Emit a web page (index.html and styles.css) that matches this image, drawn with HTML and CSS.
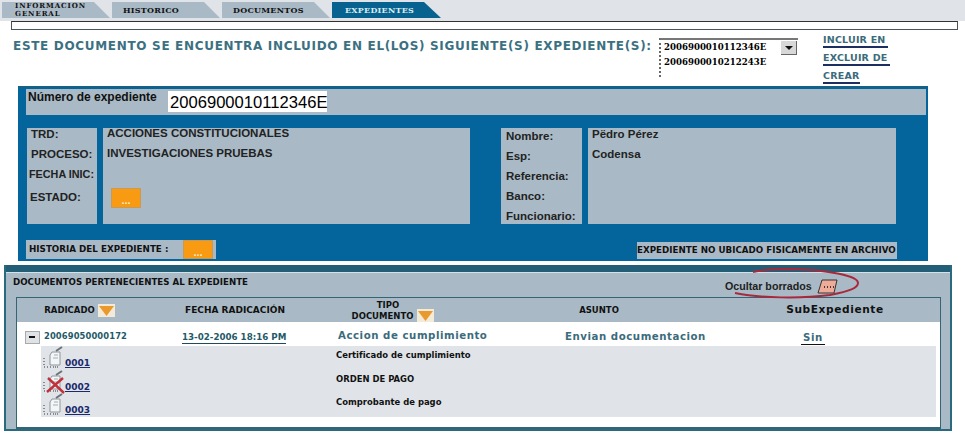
FILE: index.html
```html
<!DOCTYPE html>
<html lang="es">
<head>
    <meta charset="UTF-8">
    <title>Expedientes</title>
    <link rel="stylesheet" href="styles.css">
</head>
<body>
    <!-- pestañas -->
    <nav class="tabs">
        <a class="tab tab-two">INFORMACION<br>GENERAL</a>
        <a class="tab">HISTORICO</a>
        <a class="tab">DOCUMENTOS</a>
        <a class="tab active">EXPEDIENTES</a>
    </nav>
    <div class="empty-box"></div>

    <!-- cabecera -->
    <div class="head-row">
        <h1>ESTE DOCUMENTO SE ENCUENTRA INCLUIDO EN EL(LOS) SIGUIENTE(S) EXPEDIENTE(S):</h1>
        <div class="list-box">
            <div class="list-items">
                <div>2006900010112346E</div>
                <div>2006900010212243E</div>
            </div>
            <span class="list-arrow"></span>
        </div>
        <div class="head-links">
            <a>INCLUIR EN</a>
            <a>EXCLUIR DE</a>
            <a>CREAR</a>
        </div>
    </div>

    <!-- datos del expediente -->
    <section class="exp-panel">
        <div class="number-row">
            <span class="number-label">Número de expediente</span>
            <span class="number-value">2006900010112346E</span>
        </div>
        <div class="info-row">
            <div class="cell labels labels-left">
                <div class="l-trd">TRD:</div>
                <div class="l-proc">PROCESO:</div>
                <div class="l-fecha">FECHA INIC:</div>
                <div class="l-estado">ESTADO:</div>
            </div>
            <div class="cell values values-left">
                <div>ACCIONES CONSTITUCIONALES</div>
                <div>INVESTIGACIONES PRUEBAS</div>
                <button class="orange-btn estado-btn">...</button>
            </div>
            <div class="cell labels labels-right">
                <div>Nombre:</div>
                <div>Esp:</div>
                <div>Referencia:</div>
                <div>Banco:</div>
                <div>Funcionario:</div>
            </div>
            <div class="cell values values-right">
                <div>Pëdro Pérez</div>
                <div>Codensa</div>
            </div>
        </div>
        <div class="history-row">
            <div class="history">
                <span>HISTORIA DEL EXPEDIENTE :</span>
                <button class="orange-btn">...</button>
            </div>
            <div class="no-archive">EXPEDIENTE NO UBICADO FISICAMENTE EN ARCHIVO</div>
        </div>
    </section>

    <!-- documentos -->
    <section class="docs-panel">
        <div class="docs-top">
            <span class="docs-title">DOCUMENTOS PERTENECIENTES AL EXPEDIENTE</span>
            <div class="hide-deleted">
                <span class="hide-text">Ocultar borrados</span>
                <svg class="hide-btn" width="21" height="16" viewBox="0 0 21 16">
                    <path d="M5 1H20L17 14H1Z" fill="#eeab98" stroke="#333" stroke-width="1"/>
                    <path d="M7 8h1M10 8h1M13 8h1M16 8h1" stroke="#111" stroke-width="1.4"/>
                </svg>
                <svg class="hide-ring" width="128" height="32" viewBox="0 0 128 32">
                    <path d="M2 25C27 30 67 31 97 27C117 23 125 20 125 15C125 8 97 2 57 1C42 1 29 2 20 4" fill="none" stroke="#a8283c" stroke-width="2"/>
                </svg>
            </div>
        </div>
        <div class="docs-table">
            <div class="t-head">
                <div class="th th-rad">RADICADO <svg class="sort" width="17" height="13" viewBox="0 0 17 13"><rect width="17" height="13" fill="#f3ead8"/><path d="M1 2H16L8.5 12Z" fill="#ea9a2c"/></svg></div>
                <div class="th th-fecha">FECHA RADICACIÓN</div>
                <div class="th th-tipo"><span class="tipo-top">TIPO</span><br>DOCUMENTO <svg class="sort" width="17" height="13" viewBox="0 0 17 13"><rect width="17" height="13" fill="#f3ead8"/><path d="M1 2H16L8.5 12Z" fill="#ea9a2c"/></svg></div>
                <div class="th th-asunto">ASUNTO</div>
                <div class="th th-sub">SubExpediente</div>
            </div>
            <div class="t-row">
                <div class="td-rad"><span class="minus"></span><span class="rad-num">20069050000172</span></div>
                <a class="td-fecha">13-02-2006 18:16 PM</a>
                <div class="td-text td-tipo">Accion de cumplimiento</div>
                <div class="td-text td-asunto">Envian documentacion</div>
                <a class="td-text td-sin">Sin</a>
            </div>
            <div class="sub-rows">
                <div class="sub-row">
                    <svg class="doc-icon" width="22" height="24" viewBox="0 0 22 24"><use href="#doc"/></svg>
                    <a class="annex">0001</a>
                    <span class="annex-name">Certificado de cumplimiento</span>
                </div>
                <div class="sub-row">
                    <svg class="doc-icon" width="22" height="24" viewBox="0 0 22 24"><use href="#doc"/><path d="M5 8L21 23M20 8L4 22" stroke="#c2303a" stroke-width="2.4"/></svg>
                    <a class="annex">0002</a>
                    <span class="annex-name">ORDEN DE PAGO</span>
                </div>
                <div class="sub-row">
                    <svg class="doc-icon" width="22" height="24" viewBox="0 0 22 24"><use href="#doc"/></svg>
                    <a class="annex">0003</a>
                    <span class="annex-name">Comprobante de pago</span>
                </div>
            </div>
        </div>
    </section>

    <!-- icono de anexo -->
    <svg width="0" height="0" class="defs">
        <defs>
            <g id="doc">
                <path d="M9 6H17V19H7V9Z" fill="#f4f5f6" stroke="#8d959c" stroke-width="1"/>
                <path d="M11 9h4M10 12h5" stroke="#a5acb2"/>
                <path d="M13 5L19 1" stroke="#6a7278" stroke-width="2"/>
                <path d="M1 12v1M1 15v1M1 18v1M1 21h1M4 21h1M7 21h1M10 21h5" stroke="#333" stroke-dasharray="1 1"/>
            </g>
        </defs>
    </svg>
</body>
</html>
```

FILE: styles.css
```css
* {
    box-sizing: border-box;
}

body {
    margin: 0;
    background: #fff;
    color: #000;
    font-family: "DejaVu Sans", sans-serif;
    font-size: 10px;
}

/* pestañas */
.tabs {
    display: flex;
    gap: 2px;
    height: 21px;
    padding: 2px 0 0 2px;
    background: #e0e4e8;
}

.tab {
    width: 108px;
    height: 16px;
    padding: 1px 0 0 11px;
    background: #a9bac6;
    clip-path: polygon(0 0, 92px 0, 100% 100%, 0 100%);
    font-family: "DejaVu Serif", serif;
    font-size: 8px;
    font-weight: bold;
    line-height: 14px;
    letter-spacing: 0.25px;
    color: #111;
}

.tab.active {
    width: 109px;
    padding-left: 13px;
}

.tab-two {
    padding: 0 0 0 13px;
    font-size: 7px;
    line-height: 7.5px;
    letter-spacing: 0.9px;
}

.tab.active {
    background: #07628f;
    color: #d9ecf2;
}

.empty-box {
    height: 9px;
    margin: 0 7px 0 11px;
    border: 1px solid #4a5358;
    border-top-color: #333;
}

/* cabecera */
.head-row {
    display: flex;
    height: 56px;
    padding: 2px 0 0 13px;
}

h1 {
    width: 646px;
    margin: 7px 0 0;
    font-size: 12px;
    font-weight: bold;
    white-space: nowrap;
    letter-spacing: 0.68px;
    color: #3b7082;
}

.list-box {
    position: relative;
    width: 139px;
    height: 39px;
    margin-top: 6px;
    padding: 0 0 0 3px;
    border-top: 2px solid #777;
    border-left: 2px dotted #666;
}

.list-items div {
    height: 15px;
    font-family: "DejaVu Serif", serif;
    font-size: 8.6px;
    font-weight: bold;
    line-height: 15px;
}

.list-arrow {
    position: absolute;
    top: 1px;
    right: 1px;
    width: 16px;
    height: 14px;
    background: #d8d8d8;
    border-right: 1px solid #666;
    border-bottom: 1px solid #666;
}

.list-arrow::after {
    content: "";
    position: absolute;
    top: 5px;
    left: 4px;
    border: 4px solid transparent;
    border-top: 4px solid #111;
}

.head-links {
    display: flex;
    flex-direction: column;
    gap: 4px;
    margin: 2px 0 0 25px;
}

.head-links a {
    height: 14px;
    font-size: 9.5px;
    font-weight: bold;
    line-height: 12px;
    white-space: nowrap;
    letter-spacing: 0.2px;
    color: #3b6b7c;
    border-bottom: 2px solid #1c2f60;
}

.head-links a:nth-child(1) { width: 65px; }
.head-links a:nth-child(2) { width: 67px; }
.head-links a:nth-child(3) { width: 37px; }

/* datos del expediente */
.exp-panel {
    width: 910px;
    height: 175px;
    margin-left: 18px;
    padding: 2px 2px 0 8px;
    background: #03659c;
    border-top: 1px solid #225f77;
}

.number-row {
    display: flex;
    height: 26px;
    background: #a9bac6;
}

.number-label {
    width: 142px;
    padding: 1px 0 0 2px;
    font-family: "Liberation Sans", sans-serif;
    font-size: 12px;
    font-weight: bold;
    color: #111;
}

.number-value {
    width: 159px;
    height: 21px;
    margin-top: 2px;
    padding-left: 2px;
    background: #fff;
    font-family: "Liberation Sans", sans-serif;
    font-size: 16.6px;
    line-height: 23px;
    color: #000;
}

.info-row {
    display: flex;
    height: 96px;
    margin-top: 13px;
    padding-left: 1px;
}

.cell {
    height: 96px;
    background: #a9bac6;
    font-family: "Liberation Sans", sans-serif;
    font-size: 11.5px;
    font-weight: bold;
    color: #222;
}

.labels-left {
    width: 70px;
    padding-left: 3px;
}

.labels-left div {
    height: 20px;
    white-space: nowrap;
}

.l-trd { padding-left: 1px; }
.l-proc { padding-left: 1px; }
.l-fecha { margin-left: -1px; font-size: 10.8px; }
.l-estado { padding-top: 3px; }

.values-left {
    width: 367px;
    margin-left: 6px;
    padding-left: 4px;
}

.values div {
    height: 20px;
}

.values-left div:first-child {
    margin-top: -1px;
}

.estado-btn {
    display: block;
    margin: 21px 0 0 4px;
}

.labels-right {
    width: 81px;
    margin-left: 31px;
    padding: 1px 0 0 5px;
}

.labels-right div {
    height: 20px;
    padding-top: 1px;
    white-space: nowrap;
}

.values-right {
    width: 308px;
    margin-left: 6px;
    padding-left: 4px;
}

.orange-btn {
    width: 30px;
    height: 20px;
    padding: 4px 0 0;
    background: #f99b12;
    border: 1px solid #c99a55;
    font-family: "Liberation Sans", sans-serif;
    font-size: 11px;
    font-weight: bold;
    line-height: 12px;
    color: #f5ead0;
}

.history-row {
    display: flex;
    justify-content: space-between;
    align-items: flex-end;
    height: 19px;
    margin-top: 16px;
    padding-right: 29px;
}

.history {
    display: flex;
    justify-content: space-between;
    width: 190px;
    height: 19px;
    padding: 0 3px;
    background: #a9bac6;
    font-size: 8.75px;
    font-weight: bold;
    line-height: 19px;
    color: #111;
}

.history .orange-btn {
    height: 19px;
}

.no-archive {
    width: 260px;
    height: 17px;
    background: #a9bac6;
    font-size: 8.72px;
    font-weight: bold;
    line-height: 16px;
    white-space: nowrap;
    color: #111;
}

/* documentos */
.docs-panel {
    width: 948px;
    height: 166px;
    margin: 4px 0 0 4px;
    padding: 8px 0 0;
    background: linear-gradient(#225f77 7px, #cfe3e8 7px, #cfe3e8 8px, #a9bac6 8px);
    border: 2px solid #2a6a7e;
    border-top: 0;
}

.docs-top {
    display: flex;
    height: 24px;
    padding-left: 7px;
}

.docs-title {
    margin-top: 4px;
    font-size: 8.67px;
    font-weight: bold;
    white-space: nowrap;
    color: #111;
}

.hide-deleted {
    position: relative;
    display: flex;
    gap: 5px;
    height: 18px;
    margin: 6px 0 0 477px;
    font-family: "Liberation Sans", sans-serif;
    font-size: 10.7px;
    font-weight: bold;
    line-height: 15px;
    white-space: nowrap;
    color: #222;
}

.hide-ring {
    position: absolute;
    top: -11px;
    left: 8px;
}

.docs-table {
    width: 925px;
    height: 132px;
    margin-left: 10px;
    background: #fff;
    border: 1px solid #356475;
    border-bottom-width: 2px;
}

.t-head {
    display: grid;
    grid-template-columns: 143px 150px 176px 226px 1fr;
    height: 24px;
    background: #a9bac6;
    font-weight: bold;
    color: #111;
}

.th {
    display: flex;
    align-items: center;
    justify-content: center;
    font-size: 8.5px;
    white-space: nowrap;
}

.th-rad { padding-right: 18px; gap: 3px; }
.th-fecha { font-size: 9px; }

.th-tipo {
    display: block;
    padding: 2px 10px 0 0;
    text-align: center;
    line-height: 11px;
}

.tipo-top {
    margin-right: 10px;
}

.th-tipo .sort {
    position: relative;
    top: -1px;
    margin: -4px 0 -4px 1px;
    vertical-align: middle;
}

.sort {
    flex: none;
}

.th-sub {
    padding: 0 0 3px 18px;
    font-size: 10.6px;
    letter-spacing: 0.6px;
}

.t-row {
    display: grid;
    grid-template-columns: 165px 156px 227px 236px 1fr;
    height: 24px;
}

.td-rad {
    display: flex;
    align-items: center;
    padding: 1px 0 0 8px;
}

.minus {
    position: relative;
    width: 15px;
    height: 13px;
    margin: 3px 4px 0 0;
    background: #dfe3e6;
    border: 1px solid #aaa;
}

.minus::after {
    content: "";
    position: absolute;
    top: 4px;
    left: 3px;
    width: 6px;
    height: 2px;
    background: #111;
}

.rad-num {
    font-size: 8.4px;
    font-weight: bold;
    letter-spacing: 0.1px;
    color: #1f5a68;
}

.td-fecha {
    align-self: start;
    justify-self: start;
    margin-top: 10px;
    font-size: 8.7px;
    font-weight: bold;
    line-height: 11px;
    white-space: nowrap;
    color: #1f5a68;
    border-bottom: 1px solid #1f4a60;
}

.td-text {
    font-size: 10.2px;
    font-weight: bold;
    letter-spacing: 0.55px;
    line-height: 24px;
    white-space: nowrap;
    color: #3b6b7c;
}

.td-sin {
    justify-self: start;
    height: 17px;
    margin: 6px 0 0;
    padding: 0 2px;
    line-height: 20px;
    border-bottom: 1px solid #111;
}

.td-tipo { padding-top: 2px; }
.td-asunto { padding-top: 3px; }

.sub-rows {
    width: 895px;
    height: 71px;
    margin-left: 24px;
    background: #e0e4e8;
}

.sub-row {
    display: flex;
    height: 24px;
    padding-left: 2px;
    margin-bottom: -0.5px;
}

.doc-icon {
    flex: none;
}

.annex {
    align-self: flex-end;
    width: 271px;
    margin-bottom: 2px;
    font-size: 9px;
    font-weight: bold;
    line-height: 10px;
    color: #1a2a6c;
    text-decoration: underline;
}

.annex-name {
    margin-top: 3px;
    font-size: 9.4px;
    font-stretch: condensed;
    font-weight: bold;
    white-space: nowrap;
    color: #111;
}

.defs {
    position: absolute;
}
```
